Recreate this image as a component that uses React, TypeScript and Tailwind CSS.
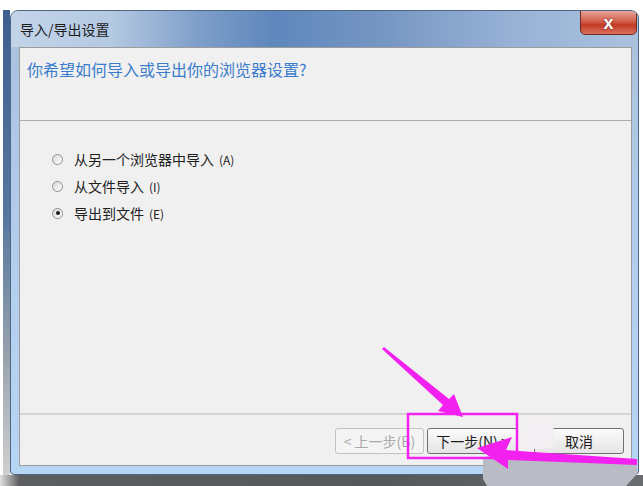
import React from 'react';

const options = [
  { label: '从另一个浏览器中导入', key: '(A)', checked: false },
  { label: '从文件导入', key: '(I)', checked: false },
  { label: '导出到文件', key: '(E)', checked: true },
];

function Radio({ checked }: { checked: boolean }) {
  return (
    <span className="w-[11px] h-[11px] rounded-full border border-[#8e8f8f] bg-[linear-gradient(135deg,#d8d8d8,#ffffff)] flex items-center justify-center">
      {checked && <span className="w-[4px] h-[4px] rounded-full bg-[#1a1a1a]" />}
    </span>
  );
}

function Annotations() {
  return (
    <svg
      className="absolute inset-0 pointer-events-none"
      width="643"
      height="486"
      viewBox="0 0 643 486"
    >
      {/* smudged areas */}
      <path d="M483 457 L515 452 L637 461 L637 474 L626 486 L487 486 L483 479 Z" fill="#b9bcc5" />
      <path d="M525 420 Q538 414 552 419 L556 446 Q540 452 523 447 Z" fill="#f2eef2" />
      {/* highlight box */}
      <rect x="408" y="414" width="109" height="44" fill="none" stroke="#f321f0" strokeWidth="2.5" />
      {/* arrow from top */}
      <polygon
        points="382,349 443,405 438,411 463,417 454,394 449,399 384,347"
        fill="#f321f0"
      />
      {/* arrow from right */}
      <polygon
        points="477,448 512,437 506,450 637,459 637,465 508,460 508,469"
        fill="#f321f0"
      />
    </svg>
  );
}

export default function App() {
  return (
    <div className="relative w-[643px] h-[486px] overflow-hidden bg-white flex flex-col font-['Noto_Sans_CJK_SC','Noto_Sans',sans-serif]">
      {/* desktop strip above */}
      <div className="h-[10px] bg-white" />

      <div className="flex h-[465px]">
        {/* desktop strip left */}
        <div className="w-[10px] border-l-[3px] border-white bg-[linear-gradient(180deg,#3f5f8f_0%,#56789f_45%,#9aa3ad_75%,#d0d0d0_100%)]" />

        {/* window */}
        <div className="w-[629px] flex flex-col rounded-t-[8px] rounded-b-[4px] border border-[#4d6685] bg-[linear-gradient(180deg,#a9c0dc_0%,#b0cbe9_40%,#b7d6f4_100%)] overflow-hidden">
          {/* title bar */}
          <div className="h-[36px] flex items-start justify-between bg-[linear-gradient(90deg,#c3d4e9_0%,#b4c9e2_16%,#7e9ec9_30%,#5f87bc_42%,#7797c3_60%,#98b2d6_80%,#aac1de_100%)]">
            <div className="pl-[9px] pt-[9px] text-[14px] leading-[18px] text-[#1c1c1c]">导入/导出设置</div>
            <div className="-mt-px mr-px w-[57px] h-[25px] rounded-b-[5px] border border-[#6d2b22] bg-[linear-gradient(180deg,#e6a598_0%,#d3604d_45%,#c23a26_60%,#d9705c_100%)] flex items-center justify-center">
              <span className="text-white text-[18px] font-bold leading-none font-['Liberation_Sans',sans-serif] [text-shadow:0_0_2px_#5a1a10]">x</span>
            </div>
          </div>

          {/* client area */}
          <div className="ml-[8px] mr-[6px] mb-[8px] h-[419px] flex flex-col border border-[#9c9c9c] bg-[#f0f0f0]">
            <div className="h-[72px] pl-[7px] pt-[9px]">
              <div className="text-[16px] leading-[24px] text-[#3a7ccd]">你希望如何导入或导出你的浏览器设置?</div>
            </div>
            <div className="h-px bg-[#acacac]" />

            <div className="flex-1 pl-[32px] pt-[28px] flex flex-col gap-[7px]">
              {options.map((o) => (
                <div key={o.key} className="h-[20px] flex items-center gap-[11px]">
                  <Radio checked={o.checked} />
                  <span className="text-[14px] leading-[20px] text-[#202020]">
                    {o.label}
                    <span className="ml-[5px] text-[12px]">{o.key}</span>
                  </span>
                </div>
              ))}
            </div>

            <div className="h-[2px] bg-[#d4d4d4]" />
            <div className="h-[50px] pt-[13px] pr-[7px] flex justify-end items-start">
              <div className="w-[89px] h-[26px] rounded-[3px] border border-[#c2c2c2] bg-[#f4f4f4] flex items-center justify-center text-[14px] text-[#a9a9a9]">
                &lt; 上一步(B)
              </div>
              <div className="ml-[3px] w-[91px] h-[26px] rounded-[3px] border border-[#6f6f6f] bg-[linear-gradient(180deg,#fbfbfb,#e4e4e4)] flex items-center justify-center text-[14px] text-[#1a1a1a]">
                下一步(N) &gt;
              </div>
              <div className="ml-[16px] w-[90px] h-[26px] rounded-[3px] border border-[#6f6f6f] bg-[linear-gradient(180deg,#fbfbfb,#e4e4e4)] flex items-center justify-center text-[14px] text-[#1a1a1a]">
                取消
              </div>
            </div>
          </div>
        </div>

        {/* desktop strip right */}
        <div className="flex-1 bg-white" />
      </div>

      {/* shadow below window */}
      <div className="flex-1 bg-[linear-gradient(90deg,#e0e0e0_0%,#5d5e60_3%,#55575b_60%,#6a6c70_100%)]" />

      <Annotations />
    </div>
  );
}
